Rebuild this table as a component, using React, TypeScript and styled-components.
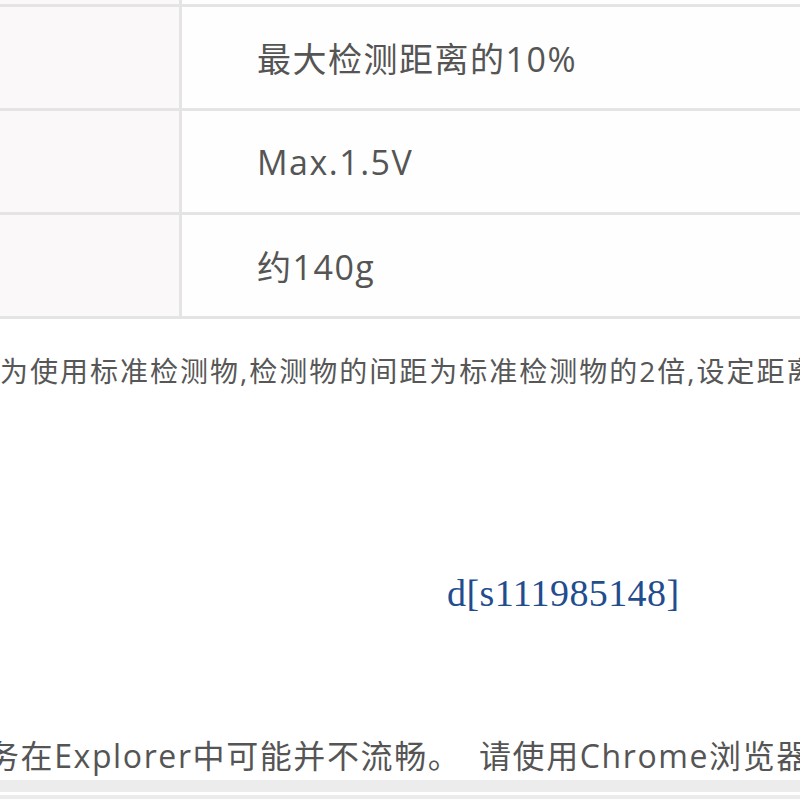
import styled, { createGlobalStyle } from 'styled-components'

const GlobalStyle = createGlobalStyle`
    html, body {
        margin: 0;
        padding: 0;
        background: #ffffff;
        overflow: hidden;
    }
`

const Page = styled.div`
    width: 800px;
    height: 800px;
    display: flex;
    flex-direction: column;
    overflow: hidden;
    font-family: "Open Sans", "Noto Sans CJK SC", sans-serif;
    color: #555555;
`

const Table = styled.div`
    display: flex;
    flex-direction: column;
`

const Row = styled.div<{ $height: number }>`
    display: grid;
    grid-template-columns: 182px 1fr;
    height: ${p => p.$height}px;
    border-bottom: 3px solid #e4e4e4;
`

const LabelCell = styled.div`
    background: #faf8f8;
    border-right: 3px solid #e4e4e4;
`

const ValueCell = styled.div`
    display: flex;
    align-items: center;
    padding-left: 75px;
    font-size: 34px;
    letter-spacing: 1.5px;
    color: #555555;
    background: #fefefe;
`

const Note = styled.p`
    margin: 32px 0 0;
    line-height: 40px;
    font-size: 28px;
    letter-spacing: 2px;
    white-space: nowrap;
    overflow: hidden;
    color: #575757;
`

const Watermark = styled.div`
    margin-top: 177px;
    padding-left: 447px;
    line-height: 50px;
    font-family: "Liberation Serif", "Times New Roman", serif;
    font-size: 38px;
    letter-spacing: 0.4px;
    color: #1f4d8d;
    white-space: nowrap;
`

const Notice = styled.p`
    margin: 116px 0 0;
    line-height: 44px;
    font-size: 32px;
    letter-spacing: 1.6px;
    white-space: nowrap;
    overflow: hidden;
    text-indent: -13px;
    color: #555555;
`

const Footer = styled.div`
    margin-top: 2px;
    display: flex;
    flex-direction: column;
`

const FooterBand = styled.div<{ $height: number; $color: string }>`
    height: ${p => p.$height}px;
    background: ${p => p.$color};
`

const values = ['最大检测距离的10%', 'Max.1.5V', '约140g']

const App = () => {
  return (
    <Page>
        <GlobalStyle />
        <Table>
            <Row $height={4}>
                <LabelCell />
                <ValueCell />
            </Row>
            {values.map(v => (
                <Row key={v} $height={101}>
                    <LabelCell />
                    <ValueCell>{v}</ValueCell>
                </Row>
            ))}
        </Table>
        <Note>为使用标准检测物,检测物的间距为标准检测物的2倍,设定距离为检测距离的70%</Note>
        <Watermark>d[s111985148]</Watermark>
        <Notice>务在Explorer中可能并不流畅。　请使用Chrome浏览器</Notice>
        <Footer>
            <FooterBand $height={12} $color="#ececec" />
            <FooterBand $height={3} $color="#ffffff" />
            <FooterBand $height={4} $color="#ebebeb" />
        </Footer>
    </Page>
  )
}

export default App
